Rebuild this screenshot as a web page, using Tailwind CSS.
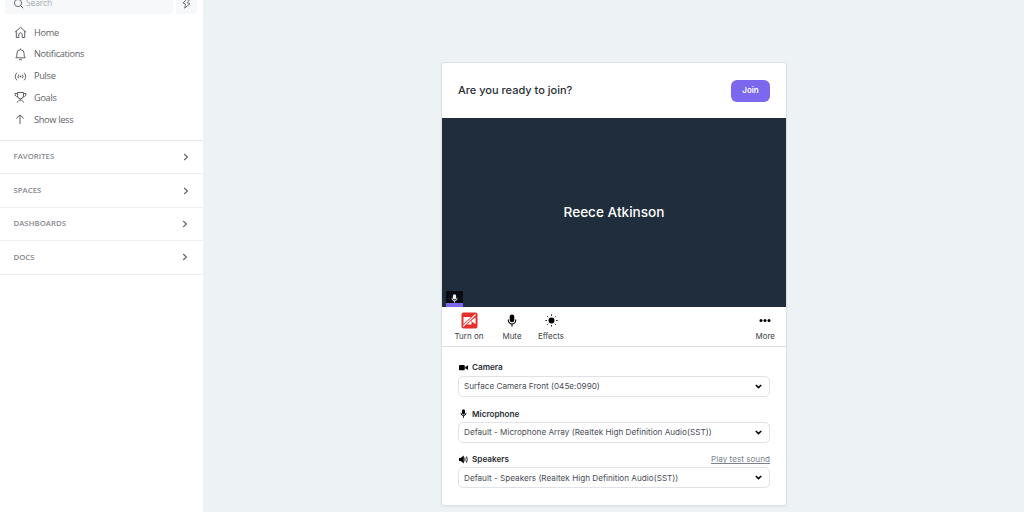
<!DOCTYPE html>
<html lang="en">
<head>
	<meta charset="UTF-8" />
	<meta name="viewport" content="width=device-width, initial-scale=1.0" />
	<title>Join call</title>
	<script src="https://cdn.jsdelivr.net/npm/@tailwindcss/browser@4"></script>
</head>
<body class="flex h-[512px] overflow-hidden bg-[#edf2f5] font-['Inter',sans-serif]">
	<!-- Sidebar -->
	<aside class="w-[203px] shrink-0 bg-white font-['Open_Sans',sans-serif] text-[#5d6066]">
		<div class="flex h-[14px] items-end gap-[3px] pl-[5px]">
			<div class="flex h-[22px] w-[168px] items-center gap-[2px] rounded-[3px] bg-[#f7f8fa] pl-[8px] text-[8.6px] text-[#a9acb1]">
				<svg class="size-[11px] text-[#6b6e74]" viewBox="0 0 11 11" fill="none" stroke="currentColor"><circle cx="5" cy="5" r="3.6" /><path d="M7.6 7.6l2.6 2.6" /></svg>
				<span class="pt-px leading-none tracking-[-0.2px]">Search</span>
			</div>
			<div class="flex h-[22px] w-[21px] items-center justify-center rounded-[3px] bg-[#f7f8fa]">
				<svg class="h-[11px] w-[9px] text-[#6b6e74]" viewBox="0 0 9 11" fill="none" stroke="currentColor" stroke-linejoin="round"><path d="M5.2.8L1 5l2.600 1-.9 4.200L8 5.700 5.200 4.600 7.300 2z" /></svg>
			</div>
		</div>

		<nav class="mt-[7px] flex h-[120px] flex-col border-b border-[#e6e9ec] pt-[0.6px] text-[9.2px] tracking-[-0.3px]">
			<a class="flex h-[21.8px] items-center gap-[7px] pl-[14px]">
				<svg class="size-[13px]" viewBox="0 0 13 13" fill="none" stroke="currentColor" stroke-linejoin="round"><path d="M1 6.200L6.500 1.300 12 6.200M2.300 5.200v6.300h2.500V8.600a1.700 1.700 0 0 1 3.400 0v2.900h2.500V5.200" /></svg>
				<span>Home</span>
			</a>
			<a class="flex h-[21.8px] items-center gap-[7px] pl-[14px]">
				<svg class="size-[13px]" viewBox="0 0 13 13" fill="none" stroke="currentColor" stroke-linejoin="round"><path d="M1.800 9.800h9.400C10.300 8.800 10.100 8 10.100 5.300a3.600 3.600 0 0 0-7.200 0C2.900 8 2.700 8.800 1.800 9.800zM5 11.700h3M6.500.6v1" /></svg>
				<span>Notifications</span>
			</a>
			<a class="flex h-[21.8px] items-center gap-[7px] pl-[14px]">
				<svg class="size-[13px]" viewBox="0 0 13 13" fill="none" stroke="currentColor" stroke-linecap="round"><path d="M2.600 3a5.400 5.400 0 0 0 0 7M10.400 3a5.400 5.400 0 0 1 0 7M4.400 4.900a2.700 2.700 0 0 0 0 3.200M8.600 4.900a2.700 2.700 0 0 1 0 3.200" /><circle cx="6.500" cy="6.500" r=".9" fill="currentColor" stroke="none" /></svg>
				<span>Pulse</span>
			</a>
			<a class="flex h-[21.8px] items-center gap-[7px] pl-[14px]">
				<svg class="size-[13px]" viewBox="0 0 13 13" fill="none" stroke="currentColor" stroke-linejoin="round"><path d="M3.500 1.500h6v3.300a3 3 0 0 1-6 0zM3.500 2.500H1c0 2.300.8 3.200 2.900 3.300M9.500 2.500H12c0 2.300-.8 3.200-2.900 3.300M6.500 7.800v1.400M3.500 11.500c.2-1.500 1.300-2.300 3-2.300s2.800.8 3 2.300" /></svg>
				<span>Goals</span>
			</a>
			<a class="flex h-[21.8px] items-center gap-[7px] pl-[14px]">
				<svg class="size-[13px]" viewBox="0 0 13 13" fill="none" stroke="currentColor"><path d="M6 11V2M2.300 5.500L6 1.900l3.700 3.600" /></svg>
				<span>Show less</span>
			</a>
		</nav>

		<div class="text-[7.8px] font-semibold text-[#85888e]">
			<div class="flex h-[33.4px] items-center justify-between border-b border-[#edf0f2] pr-[14px] pl-[13.500px]">
				<span>FAVORITES</span>
				<svg class="h-[8px] w-[6px]" viewBox="0 0 6 8" fill="none" stroke="#62656b" stroke-width="1.200"><path d="M1.200 1l3.200 3-3.200 3" /></svg>
			</div>
			<div class="flex h-[33.4px] items-center justify-between border-b border-[#edf0f2] pr-[14px] pl-[13.500px]">
				<span>SPACES</span>
				<svg class="h-[8px] w-[6px]" viewBox="0 0 6 8" fill="none" stroke="#62656b" stroke-width="1.200"><path d="M1.200 1l3.200 3-3.200 3" /></svg>
			</div>
			<div class="flex h-[33.4px] items-center justify-between border-b border-[#edf0f2] pr-[15px] pl-[13.500px]">
				<span>DASHBOARDS</span>
				<svg class="h-[8px] w-[6px]" viewBox="0 0 6 8" fill="none" stroke="#62656b" stroke-width="1.200"><path d="M1.200 1l3.200 3-3.200 3" /></svg>
			</div>
			<div class="flex h-[33.4px] items-center justify-between border-b border-[#edf0f2] pr-[15px] pl-[13.500px]">
				<span>DOCS</span>
				<svg class="h-[8px] w-[6px]" viewBox="0 0 6 8" fill="none" stroke="#62656b" stroke-width="1.200"><path d="M1.200 1l3.200 3-3.200 3" /></svg>
			</div>
		</div>
	</aside>

	<!-- Join card -->
	<main class="pt-[62px] pl-[238px]">
		<section class="h-[444px] w-[346px] rounded-[3px] border border-[#dce1e6] bg-white text-[#292d34] shadow-xs">
			<header class="flex h-[55px] items-center justify-between pr-[16px] pl-[16px]">
				<h1 class="text-[11px] font-medium">Are you ready to join?</h1>
				<button class="h-[22px] w-[39px] rounded-[6px] bg-[#7b68ee] pb-px text-[8px] font-semibold text-white">Join</button>
			</header>

			<div class="relative flex h-[189px] items-center justify-center bg-[#202d3d]">
				<span class="text-[13.600px] font-medium text-white">Reece Atkinson</span>
				<div class="absolute bottom-0 left-[4px] flex h-[16px] w-[17px] justify-center border-b-4 border-[#7b68ee] bg-[#090d13] pt-[3px] text-white">
					<svg class="h-[9px] w-[7px]" viewBox="0 0 10 14" fill="none" stroke="currentColor" stroke-width="1.300"><rect x="2.500" y=".5" width="5" height="8" rx="2.500" fill="currentColor" stroke="none" /><path d="M1 6v.5a4 4 0 0 0 8 0V6M5 10.500v3" /></svg>
				</div>
			</div>

			<div class="flex h-[40px] justify-between border-b border-[#d9dde1] pt-[5px] pr-[11px] pl-[12px] text-[8px] text-[#3b3f46]">
				<div class="flex">
					<div class="flex w-[30px] flex-col items-center">
						<svg class="size-[17px]" viewBox="0 0 17 17"><rect x=".5" y=".5" width="16" height="16" rx="2" fill="#e5302e" /><path d="M2.500 5h8v7.500h-8zM11 7.800l3.500-2.300v6.500L11 9.700z" fill="#fff" /><path d="M2 14.500L14.500 2.500" stroke="#e5302e" stroke-width="2.800" /><path d="M2 14.500L14.500 2.500" stroke="#fff" stroke-width="1.100" /></svg>
						<span class="mt-px leading-[12px] whitespace-nowrap">Turn on</span>
					</div>
					<div class="ml-[17px] flex w-[22px] flex-col items-center">
						<svg class="h-[17px] w-[10px] py-[2px] text-black" viewBox="0 0 10 14" fill="none" stroke="currentColor" stroke-width="1.200"><rect x="2.500" y=".5" width="5" height="8.500" rx="2.500" fill="currentColor" stroke="none" /><path d="M1 6v.8a4 4 0 0 0 8 0V6M5 10.800v2.700" /></svg>
						<span class="mt-px leading-[12px]">Mute</span>
					</div>
					<div class="ml-[14px] flex w-[28px] flex-col items-center">
						<svg class="size-[17px] p-[2px] text-black" viewBox="0 0 14 14" fill="none" stroke="currentColor" stroke-linecap="round"><circle cx="7" cy="7" r="3.200" fill="currentColor" stroke="none" /><path d="M7 .9v.7M7 12.400v.7M.9 7h.7M12.400 7h.7M2.700 2.700l.5.5M10.800 10.800l.5.5M2.700 11.300l.5-.5M10.800 3.200l.5-.5" /></svg>
						<span class="mt-px leading-[12px]">Effects</span>
					</div>
				</div>
				<div class="flex flex-col items-center">
					<svg class="h-[17px] w-[12px] text-black" viewBox="0 0 12 17" fill="currentColor"><circle cx="2" cy="8.500" r="1.500" /><circle cx="6" cy="8.500" r="1.500" /><circle cx="10" cy="8.500" r="1.500" /></svg>
					<span class="mt-px leading-[12px]">More</span>
				</div>
			</div>

			<div class="flex flex-col gap-[9.700px] pt-[13px] pr-[16px] pl-[16px] text-[8.170px]">
				<div>
					<div class="flex h-[16px] items-center gap-[4px] pb-px pl-px font-semibold">
						<svg class="size-[9px] text-black" viewBox="0 0 9 9" fill="currentColor"><rect y="1.900" width="5.800" height="5.400" rx="1" /><path d="M6.200 4L9 2.300v4.600L6.200 5.200z" /></svg>
						<span>Camera</span>
					</div>
					<div class="flex h-[21px] items-center justify-between rounded-[5px] border border-[#dfe2e6] pr-[7px] pl-[5px] text-[#4a4e55]">
						<span>Surface Camera Front (045e:0990)</span>
						<svg class="h-[5px] w-[7px] text-black" viewBox="0 0 7 5" fill="none" stroke="currentColor" stroke-width="1.500"><path d="M.8 1l2.700 2.600L6.200 1" /></svg>
					</div>
				</div>
				<div>
					<div class="flex h-[15px] items-center gap-[4px] pb-px pl-px font-semibold">
						<svg class="size-[9px] text-black" viewBox="0 0 9 9" fill="none" stroke="currentColor" stroke-width=".9"><rect x="3" y=".2" width="3" height="5.400" rx="1.500" fill="currentColor" stroke="none" /><path d="M2 3.800v.3a2.500 2.500 0 0 0 5 0v-.3M4.500 6.600v2.200" /></svg>
						<span>Microphone</span>
					</div>
					<div class="flex h-[21px] items-center justify-between rounded-[5px] border border-[#dfe2e6] pr-[7px] pl-[5px] text-[#4a4e55]">
						<span>Default - Microphone Array (Realtek High Definition Audio(SST))</span>
						<svg class="h-[5px] w-[7px] text-black" viewBox="0 0 7 5" fill="none" stroke="currentColor" stroke-width="1.500"><path d="M.8 1l2.700 2.600L6.200 1" /></svg>
					</div>
				</div>
				<div>
					<div class="flex h-[15px] items-center gap-[4px] pb-px pl-px font-semibold">
						<svg class="size-[9px] text-black" viewBox="0 0 9 9" fill="currentColor"><path d="M0 3h1.600L4.800.6v7.800L1.600 6H0z" /><path d="M5.900 2.500v4M7.600 1.500q1.200 3 0 6" fill="none" stroke="currentColor" stroke-width=".9" /></svg>
						<span>Speakers</span>
						<a class="ml-auto font-normal text-[#7c828d] underline">Play test sound</a>
					</div>
					<div class="flex h-[21px] items-center justify-between rounded-[5px] border border-[#dfe2e6] pr-[7px] pl-[5px] text-[#4a4e55]">
						<span>Default - Speakers (Realtek High Definition Audio(SST))</span>
						<svg class="h-[5px] w-[7px] text-black" viewBox="0 0 7 5" fill="none" stroke="currentColor" stroke-width="1.500"><path d="M.8 1l2.700 2.600L6.200 1" /></svg>
					</div>
				</div>
			</div>
		</section>
	</main>
</body>
</html>
